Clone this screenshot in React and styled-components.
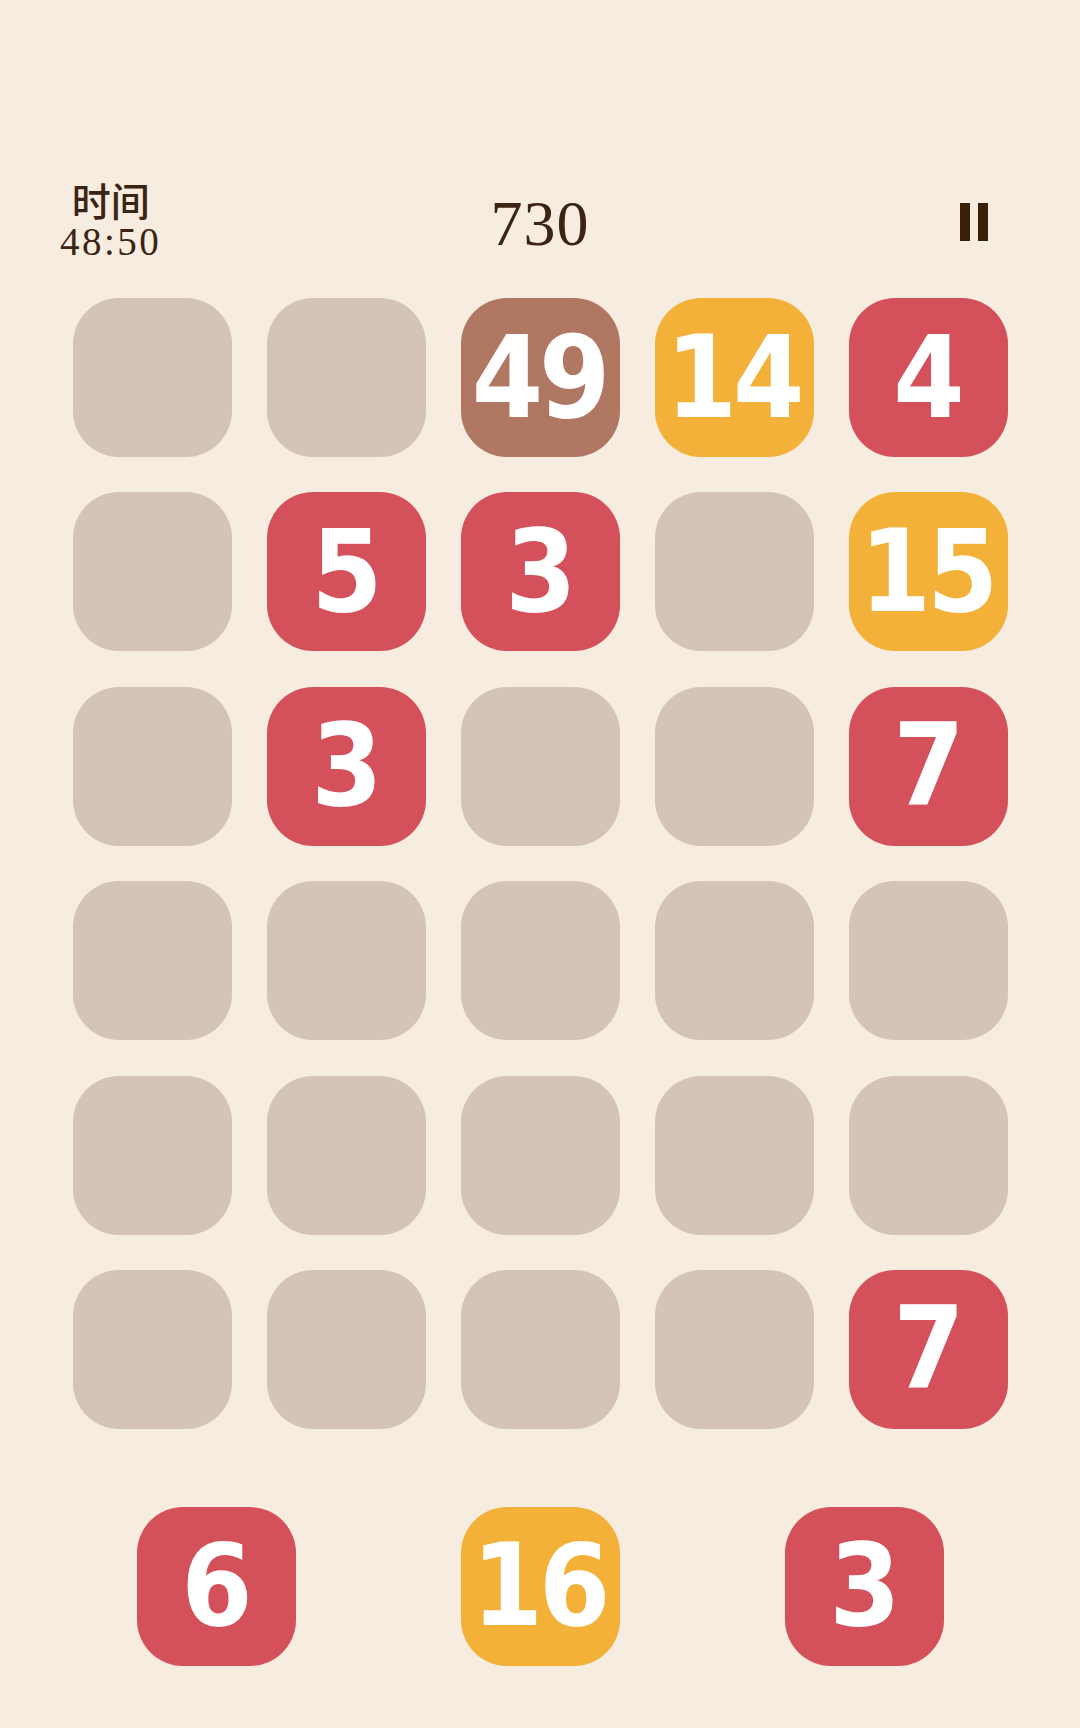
import React from "react";
import styled, { createGlobalStyle } from "styled-components";

const Global = createGlobalStyle`
  html, body { margin: 0; padding: 0; background: #f6ecdf; }
  #root { min-height: 1728px; }
`;

const Page = styled.div`
  width: 1080px;
  height: 1728px;
  background: #f6ecdf;
  display: flex;
  flex-direction: column;
  align-items: center;
  box-sizing: border-box;
  padding-top: 182px;
`;

const Header = styled.div`
  width: 936px;
  height: 80px;
  display: grid;
  grid-template-columns: 1fr auto 1fr;
  grid-template-rows: 80px;
  align-items: center;
  color: #3b2414;
`;

const TimeBlock = styled.div`
  justify-self: start;
  margin-left: -12px;
  display: flex;
  flex-direction: column;
  align-items: center;
`;

const TimeLabel = styled.div`
  font-family: "Noto Sans CJK SC", "Noto Sans", sans-serif;
  font-weight: 500;
  font-size: 39px;
  line-height: 34px;
`;

const TimeValue = styled.div`
  font-family: "Liberation Serif", serif;
  font-size: 39px;
  line-height: 40px;
  padding-top: 6px;
  letter-spacing: 2.5px;
`;

const Score = styled.div`
  font-family: "Liberation Serif", serif;
  font-size: 64px;
  line-height: 1;
  letter-spacing: 1px;
  margin-top: 4px;
`;

const PauseButton = styled.div`
  justify-self: end;
  margin-right: 20px;
  display: flex;
  gap: 8px;
  height: 38px;
`;

const PauseBar = styled.span`
  width: 10px;
  height: 38px;
  background: #3a2008;
`;

const Board = styled.div`
  margin-top: 36px;
  display: grid;
  grid-template-columns: repeat(5, 159px);
  grid-auto-rows: 159px;
  column-gap: 35px;
  row-gap: 35.4px;
`;

const COLORS = {
  empty: "#d3c4b5",
  red: "#d4505a",
  yellow: "#f3b13a",
  brown: "#b07763",
};

const Tile = styled.div`
  width: 159px;
  height: 159px;
  border-radius: 46px;
  background: ${(p) => COLORS[p.$kind]};
  display: flex;
  align-items: center;
  justify-content: center;
  color: #ffffff;
  font-family: "DejaVu Sans Condensed", "DejaVu Sans", sans-serif;
  font-stretch: condensed;
  font-weight: 700;
  font-size: 114px;
  line-height: 1;
  letter-spacing: -4px;
  padding-right: 2px;
  box-sizing: border-box;
`;

const Tray = styled.div`
  margin-top: 78px;
  display: flex;
  gap: 165px;
`;

const kindFor = (v) => {
  if (v == null) return "empty";
  if (v === 49) return "brown";
  if (v === 14 || v === 15 || v === 16) return "yellow";
  return "red";
};

const board = [
  [null, null, 49, 14, 4],
  [null, 5, 3, null, 15],
  [null, 3, null, null, 7],
  [null, null, null, null, null],
  [null, null, null, null, null],
  [null, null, null, null, 7],
];

const tray = [6, 16, 3];

export default function App() {
  return (
    <>
      <Global />
      <Page>
        <Header>
          <TimeBlock>
            <TimeLabel>时间</TimeLabel>
            <TimeValue>48:50</TimeValue>
          </TimeBlock>
          <Score>730</Score>
          <PauseButton>
            <PauseBar />
            <PauseBar />
          </PauseButton>
        </Header>
        <Board>
          {board.flatMap((row, r) =>
            row.map((v, c) => (
              <Tile key={`${r}-${c}`} $kind={kindFor(v)}>
                {v ?? ""}
              </Tile>
            ))
          )}
        </Board>
        <Tray>
          {tray.map((v, i) => (
            <Tile key={i} $kind={kindFor(v)}>
              {v}
            </Tile>
          ))}
        </Tray>
      </Page>
    </>
  );
}
